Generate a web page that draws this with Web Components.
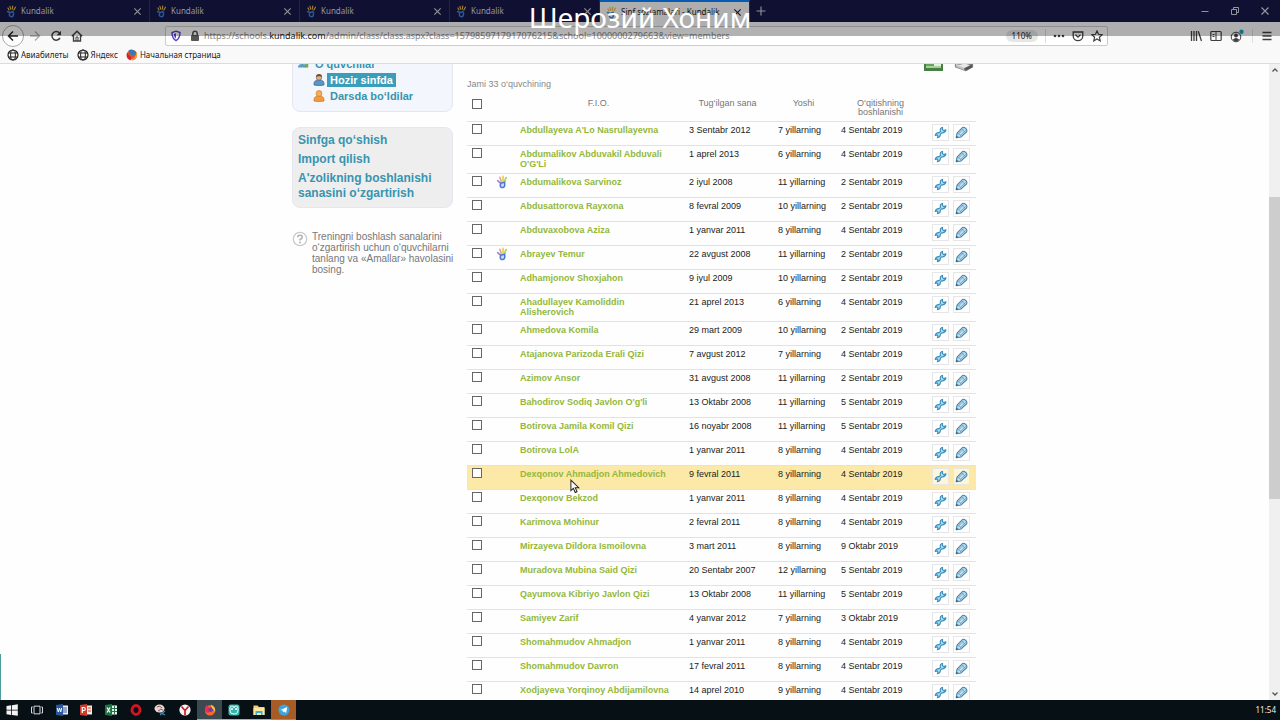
<!DOCTYPE html>
<html lang="uz">
<head>
<meta charset="utf-8">
<title>Sinf sozlamalari - Kundalik</title>
<style>
html, body { margin: 0; height: 100%; overflow: hidden; }
body { font-family: "Liberation Sans", Arial, sans-serif; font-size: 9px; background: #fefefe; }
</style>
</head>
<body>
<app-desktop></app-desktop>
<script>
const define = (name, render) => customElements.define(name, class extends HTMLElement {
  connectedCallback() {
    if (this.shadowRoot) return;
    const t = document.createElement('template');
    t.innerHTML = render(this);
    this.attachShadow({ mode: 'open' }).append(t.content.cloneNode(true));
  }
});

const icons = {
  kundalik: ['0 0 14 16', '<g fill="none" stroke-linecap="round"><path d="M6 5L5 1.500M8 5l.6-4M10 6l2-3.500M3.800 6L2.500 3.500" stroke="#e8bb3c" stroke-width="1.500"/><path d="M2 8l3 1.500 4-1.500M5 9q-2 5 1.500 5.500t3-5" stroke="#3f7fdc" stroke-width="1.900"/></g>'],
  hand: ['0 0 14 16', '<g fill="none" stroke-linecap="round"><path d="M6 7L4.500 2.500" stroke="#eaa7a0" stroke-width="2"/><path d="M8 7l.3-5.500" stroke="#e6d75c" stroke-width="2.200"/><path d="M9.800 7.500l2-4.500" stroke="#b7d36c" stroke-width="2.200"/><path d="M2 6.500l3.500 3" stroke="#9a86cf" stroke-width="2"/><path d="M5.500 9.500L10 8.200q1 5.800-2 6.200t-3-2.400z" stroke="#4d78cf" stroke-width="1.800" fill="#cfdcf6"/></g>'],
  close: ['0 0 10 10', '<path d="M1.5 1.5l7 7m0-7l-7 7" stroke="currentColor" stroke-width="1.2"/>'],
  plus: ['0 0 10 10', '<path d="M5 .5v9M.5 5h9" stroke="currentColor" stroke-width="1.1"/>'],
  minimize: ['0 0 10 10', '<path d="M1.5 5.5h7" stroke="currentColor"/>'],
  restore: ['0 0 10 10', '<path d="M1.5 3.5h5v5h-5zM3.5 3V1.5h5v5H7" fill="none" stroke="currentColor"/>'],
  back: ['0 0 12 12', '<path d="M11 6H1.5M6 1.5L1.5 6 6 10.500" fill="none" stroke="currentColor" stroke-width="1.500"/>'],
  forward: ['0 0 12 12', '<path d="M1 6h9.500M6 1.500L10.500 6 6 10.500" fill="none" stroke="currentColor" stroke-width="1.300"/>'],
  reload: ['0 0 12 12', '<path d="M10 8a4.300 4.300 0 1 1-.5-5" fill="none" stroke="currentColor" stroke-width="1.500"/><path d="M11 .8v4.400H6.600z" fill="currentColor"/>'],
  home: ['0 0 12 12', '<path d="M.8 6.200L6 1.200l5.200 5M2.500 5.500V11h7V5.500" fill="none" stroke="currentColor" stroke-width="1.400"/><path d="M5 11V7h2v4" fill="none" stroke="currentColor"/>'],
  shield: ['0 0 12 12', '<path d="M6 1.200l4 1.300c0 4.200-1 6.400-4 8.200-3-1.800-4-4-4-8.200z" fill="none" stroke="#5b41c9" stroke-width="1.400"/><path d="M6 3.300v5.200C4.500 7.400 4 6.200 3.900 4z" fill="#5b41c9"/>'],
  lock: ['0 0 12 12', '<rect x="2" y="5" width="8" height="6" rx="1" fill="#555"/><path d="M3.800 5V3.500a2.200 2.200 0 0 1 4.400 0V5" fill="none" stroke="#555" stroke-width="1.500"/>'],
  dots: ['0 0 12 12', '<g fill="currentColor"><circle cx="2" cy="6" r="1.300"/><circle cx="6" cy="6" r="1.300"/><circle cx="10" cy="6" r="1.300"/></g>'],
  pocket: ['0 0 12 12', '<path d="M1.200 2h9.600v4a4.800 4.600 0 0 1-9.600 0z" fill="none" stroke="currentColor" stroke-width="1.300"/><path d="M3.500 4.800L6 7.200l2.500-2.400" fill="none" stroke="currentColor" stroke-width="1.300"/>'],
  star: ['0 0 12 12', '<path d="M6 .9l1.500 3.400 3.700.4-2.800 2.500.8 3.700L6 9l-3.200 1.900.8-3.700L.8 4.700l3.700-.4z" fill="none" stroke="currentColor" stroke-width="1.200"/>'],
  library: ['0 0 12 12', '<path d="M1.500 1v10M4 1v10M6.500 1v10M8.300 1.300L11.500 11" stroke="currentColor" stroke-width="1.300" fill="none"/>'],
  sidebar: ['0 0 12 12', '<rect x=".8" y="1.500" width="10.400" height="9" rx="1" fill="none" stroke="currentColor" stroke-width="1.200"/><path d="M6 2v8M2.500 4.500h2M2.500 6.500h2" stroke="currentColor"/>'],
  account: ['0 0 14 14', '<circle cx="6" cy="8" r="4.800" fill="none" stroke="currentColor"/><circle cx="6" cy="6.500" r="1.900" fill="currentColor"/><path d="M2.800 10.700q3.200-3.200 6.400 0-3.200 3-6.400 0" fill="currentColor"/><circle cx="11.500" cy="2.700" r="2.200" fill="#19a5c4"/>'],
  menu: ['0 0 12 12', '<path d="M1.500 2.500h9M1.500 6h9M1.500 9.500h9" stroke="currentColor" stroke-width="1.300"/>'],
  globe: ['0 0 12 12', '<g fill="none" stroke="currentColor"><circle cx="6" cy="6" r="5" stroke-width="1.200"/><ellipse cx="6" cy="6" rx="2.400" ry="5"/><path d="M1.500 4h9M1.500 8h9"/></g>'],
  firefox: ['0 0 14 14', '<circle cx="7" cy="7.500" r="6" fill="#ff672a"/><path d="M1 7C1 3 3 1.500 3.500 1.200c0 2 1 2.300 2.500 2.300C5 5 6 8 9 7.500 7 11 1 11 1 7z" fill="#e62f58"/><circle cx="8" cy="6.500" r="2.800" fill="#5f42b7"/><path d="M8 .5c4 2 6 5 4.800 9.200C12 7 11 6 9.500 5.200z" fill="#ffc53d"/>'],
  firefoxOld: ['0 0 14 14', '<circle cx="7" cy="7" r="6" fill="#e8502a"/><path d="M3 1.500Q8-1 12 4L9.500 8 4 6z" fill="#3779bb"/><path d="M12 3.500q2.500 4-1 8-4 3-8 0 5 1 7-2t2-6z" fill="#f9a32b"/><path d="M1.500 3.500C2 5 3 8 6 9l-.5 4C1 12-.5 8 1.500 3.500z" fill="#d3262b"/>'],
  users: ['0 0 14 12', '<circle cx="5" cy="4" r="2.500" fill="#c89a72"/><path d="M0 10q0-4 5-4t5 4z" fill="#5b9bc4"/><path d="M8 5l4-3v8H8z" fill="#72ac54"/>'],
  userBlue: ['0 0 12 12', '<path d="M1 11V9.500Q1 6 6 6t5 3.500V11q-5 1.200-10 0z" fill="#5796cb" stroke="#3c6f9f" stroke-width=".8"/><circle cx="6" cy="3.500" r="2.700" fill="#dfb48c" stroke="#80583d" stroke-width=".7"/><path d="M3 3q0-3 3-3t3 3Q6 1.500 3 3" fill="#705038"/>'],
  userOrange: ['0 0 12 12', '<path d="M1 11V9.500Q1 6 6 6t5 3.500V11q-5 1.200-10 0z" fill="#f29a3d" stroke="#d77d23" stroke-width=".8"/><circle cx="6" cy="3.500" r="2.900" fill="#f6b05c" stroke="#d77d23" stroke-width=".8"/>'],
  help: ['0 0 16 16', '<circle cx="8" cy="8" r="6.700" fill="#fff" stroke="#cacaca" stroke-width="1.300"/><path d="M5.700 6.300q0-2 2.300-2t2.300 1.900Q10.300 7.500 8 8.500v1" fill="none" stroke="#b0b0b0" stroke-width="1.500"/><circle cx="8" cy="11.500" r=".9" fill="#b0b0b0"/>'],
  wrench: ['0 0 14 14', '<path d="M9.200 1.400Q6.200 2.200 6.900 5.800L5.600 7.200Q2.200 7 1.300 10.200l1.900-.5 1 1-.6 2Q7 12.200 6.900 8.700L8.300 7.300Q12 7.700 12.900 4.200l-2.300.8-1.500-1.400z" fill="#a9dcf0" stroke="#3a8fbb" stroke-width="1.200" stroke-linejoin="round"/>'],
  pencil: ['0 0 14 14', '<path d="M1.300 12.700l.9-5L8 1.700q1.500-1 3.500.8t1 3.700L6.600 11.800z" fill="#c4e1f1" stroke="#4485ad" stroke-width="1.200" stroke-linejoin="round"/><path d="M2.200 7.700q3.800.4 4.400 4.100M4.300 8L9.600 2.700M6.200 9.800l5.400-5.300M7 3l4.500 4.300" fill="none" stroke="#5a94b8" stroke-width=".8"/><path d="M1.200 12.800l.5-2.600 2 2z" fill="#27688f"/>'],
  excel: ['0 0 20 16', '<path d="M0 0h19v15H0z" fill="#487f45"/><path d="M2 1h15v11H2z" fill="#e5f2df"/><path d="M2 3h8v8H2z" fill="#68a45a"/><path d="M2 10h15v2H2z" fill="#a9cf9d"/>'],
  printer: ['0 0 22 17', '<path d="M1 7l7-4 13 3v6l-8 4.500L1 12z" fill="#7d7d7d"/><path d="M2 8l9 3v4L2 11.500z" fill="#c4c4c4"/><path d="M4 10l8 3 6-3-6-2z" fill="#e8e8e8"/><path d="M12 13l8-4v3l-7 4z" fill="#555"/>'],
  windows: ['0 0 12 12', '<path fill="#f4f4f4" d="M.5 2l4.700-.7v4.400H.5zM6 1.200L11.800.3v5.400H6zM.5 6.400h4.700v4.500L.5 10.200zM6 6.400h5.800v5.400L6 11z"/>'],
  taskview: ['0 0 14 12', '<path d="M3.500 1.500h7v9h-7zM2 2.500H.6v7H2M12 2.500h1.400v7H12" fill="none" stroke="#e5e5e5" stroke-width="1.100"/>'],
  word: ['0 0 12 12', '<path fill="#e9effb" d="M5 1.500h7v9H5z"/><path stroke="#39589b" d="M7 4h4M7 6h4M7 8h4"/><path fill="#2b579a" d="M0 1l7-1v12l-7-1z"/><path d="M1.300 4l1 4 1.200-4 1.200 4 1-4" fill="none" stroke="#fff"/>'],
  ppt: ['0 0 12 12', '<path fill="#f8e9e5" d="M5 1.500h7v9H5z"/><path stroke="#d1452f" d="M8 4h3M8 7h3"/><path fill="#cb3e2c" d="M0 1l7-1v12l-7-1z"/><path d="M2.300 9V3.500h1.500a1.500 1.500 0 0 1 0 3H2.300" fill="none" stroke="#fff" stroke-width="1.200"/>'],
  xls: ['0 0 12 12', '<path fill="#e5f4e9" d="M5 1.500h7v9H5z"/><path stroke="#217346" d="M9.500 2v8M7 4.500h5M7 7.500h5"/><path fill="#217346" d="M0 1l7-1v12l-7-1z"/><path d="M2 3.500l3 5m0-5l-3 5" stroke="#fff" stroke-width="1.200"/>'],
  opera: ['0 0 12 12', '<ellipse cx="6" cy="6" rx="4" ry="4.400" fill="none" stroke="#d51224" stroke-width="3"/>'],
  snip: ['0 0 12 12', '<ellipse cx="5.500" cy="4.500" rx="5" ry="4" fill="#e5d9d7"/><path d="M3 3q3-2 5 1M4 7q3-3 5-1" stroke="#a54945" fill="none"/><path d="M5 8l6 3M11 7l-5 4" stroke="#4d8ca8" stroke-width="1.200"/>'],
  yandex: ['0 0 12 12', '<circle cx="6" cy="6" r="5.600" fill="#f5f5f5"/><path d="M2.500 2.500L6 6.500l3.500-4M6 6v5" fill="none" stroke="#c51f2d" stroke-width="1.700"/>'],
  camera: ['0 0 12 12', '<rect x=".5" y=".5" width="11" height="11" rx="2" fill="#35b4ad"/><path d="M2 4q0-2 2-2t2 2q0-2 2-2t2 2v3q-1 4-4 3-4 0-4-3z" fill="none" stroke="#e4ffff"/><circle cx="4" cy="5" r="1" fill="#fff"/><circle cx="8" cy="5" r="1" fill="#fff"/>'],
  folder: ['0 0 12 12', '<path d="M.5 1.500h4L6 3h5.500v8H.5z" fill="#f5d36a"/><path d="M.5 4h11v7H.5z" fill="#ffe69a"/><path d="M2.500 11V7h7v4H8V9H4v2z" fill="#42a8d8"/>'],
  telegram: ['0 0 12 12', '<circle cx="6" cy="6" r="5.600" fill="#3ba6dc"/><path d="M2.300 5.900l7-2.900-1.200 6-2-1.500-1.100 1-.3-1.900z" fill="#fff"/>'],
  cursor: ['0 0 12 16', '<path d="M1 1v11.500l2.700-2.500 2 4.500 2-.9-2-4.300h3.800z" fill="#fff" stroke="#222" stroke-width="1.100"/>'],
  up: ['0 0 8 8', '<path d="M1.500 5.500L4 3l2.500 2.500" fill="none" stroke="#555" stroke-width="1.300"/>'],
  down: ['0 0 8 8', '<path d="M1.500 2.500L4 5l2.500-2.500" fill="none" stroke="#555" stroke-width="1.300"/>']
};

define('ui-icon', el => {
  const [box, body] = icons[el.getAttribute('name')];
  return `<style>:host{display:inline-block;flex:none;width:12px;height:12px}svg{display:block;width:100%;height:100%}</style>
  <svg viewBox="${box}" aria-hidden="true">${body}</svg>`;
});

define('browser-tab', () => `<style>
:host{display:flex;flex:0 0 150px;box-sizing:border-box;border-right:1px solid #34365c;color:#d5d5de;font:8px/22px "Noto Sans",sans-serif;min-width:0}
:host([active]){background:#fafafa;color:#222;border-top:2px solid #0a84ff;line-height:20px}
.tab{display:flex;align-items:center;flex:1;padding:0 7px 0 6px;gap:4px;min-width:0}
.label{flex:1;white-space:nowrap;overflow:hidden}
ui-icon{width:11px;height:13px}
button{all:unset;display:flex}button ui-icon{width:9px;height:9px}
</style><div class="tab"><ui-icon name="kundalik"></ui-icon><span class="label"><slot></slot></span>
<button aria-label="Yopish"><ui-icon name="close"></ui-icon></button></div>`);

define('browser-tabs', () => `<style>
:host{display:flex;height:22px;background:#17174a;color:#d5d5de}
button{all:unset;display:flex;align-items:center;justify-content:center;width:30px}
.new{width:22px}
.space{flex:1}
ui-icon{width:10px;height:10px}
</style>
<browser-tab>Kundalik</browser-tab><browser-tab>Kundalik</browser-tab><browser-tab>Kundalik</browser-tab><browser-tab>Kundalik</browser-tab><browser-tab active>Sinf sozlamalari - Kundalik</browser-tab>
<button class="new" aria-label="Yangi varaq"><ui-icon name="plus"></ui-icon></button><span class="space"></span>
<button aria-label="Yig‘ish"><ui-icon name="minimize"></ui-icon></button><button aria-label="Tiklash"><ui-icon name="restore"></ui-icon></button><button aria-label="Yopish"><ui-icon name="close"></ui-icon></button>`);

define('browser-toolbar', () => `<style>
:host{display:flex;align-items:center;height:23px;background:#f9f9fa;color:#3f3f42;padding:2px 7px 0 2px;gap:9px}
button{all:unset;display:flex;align-items:center;justify-content:center}
.back{width:20px;height:20px;border:1px solid #aaa;border-radius:50%;background:#fff;color:#222;margin-right:-4px}
.fwd{color:#aaa}
.address{flex:1;display:flex;align-items:center;box-sizing:border-box;height:20px;margin-left:73px;border:1px solid #ccc;border-radius:2px;background:#fff;padding:0 4px;gap:7px}
.url{flex:1;margin-left:-4px;font:9px/18px "Noto Sans",sans-serif;color:#888;white-space:nowrap;overflow:hidden}
.url b{font-weight:400;color:#222}
.zoom{font:8px/12px "Noto Sans",sans-serif;padding:0 6px;border-radius:6px;background:#e6e6e6;color:#222}
.sep{width:1px;height:14px;background:#ddd}
.right{display:flex;align-items:center;gap:8px;margin-left:73px}
.account{width:14px;height:14px}
</style>
<button class="back" aria-label="Orqaga"><ui-icon name="back"></ui-icon></button>
<button class="fwd" aria-label="Oldinga"><ui-icon name="forward"></ui-icon></button>
<button aria-label="Yangilash"><ui-icon name="reload"></ui-icon></button>
<button aria-label="Bosh sahifa"><ui-icon name="home"></ui-icon></button>
<div class="address"><ui-icon name="shield"></ui-icon><ui-icon name="lock"></ui-icon>
<div class="url" role="textbox" tabindex="0" contenteditable="plaintext-only" spellcheck="false" aria-label="Manzil">https://schools.<b>kundalik.com</b>/admin/class/class.aspx?class=1579859717917076215&amp;school=1000000279663&amp;view=members</div>
<button class="zoom">110%</button><span class="sep"></span><button aria-label="Amallar"><ui-icon name="dots"></ui-icon></button><button aria-label="Pocket"><ui-icon name="pocket"></ui-icon></button><button aria-label="Xatcho‘p"><ui-icon name="star"></ui-icon></button></div>
<div class="right"><button aria-label="Kutubxona"><ui-icon name="library"></ui-icon></button><button aria-label="Yon panel"><ui-icon name="sidebar"></ui-icon></button><button aria-label="Hisob"><ui-icon class="account" name="account"></ui-icon></button><span class="sep"></span><button aria-label="Menyu"><ui-icon name="menu"></ui-icon></button></div>`);

define('bookmark-bar', () => `<style>
:host{display:flex;align-items:center;height:16px;background:#f9f9fa;border-bottom:1px solid #dcdcdc;padding-left:7px;gap:8px;font:8px/16px "Noto Sans",sans-serif}
a{display:flex;align-items:center;gap:2px;color:#222;text-decoration:none}
</style><a href="#avia"><ui-icon name="globe"></ui-icon>Авиабилеты</a><a href="#yandex"><ui-icon name="globe"></ui-icon>Яндекс</a><a href="#start"><ui-icon name="firefoxOld"></ui-icon>Начальная страница</a>`);

define('class-sidebar', () => `<style>
:host{display:block;width:161px;flex:none;color:#3894af}
a{color:inherit;text-decoration:none}
nav{box-sizing:border-box;border:1px solid #e4e7ee;border-radius:8px;font-weight:700}
.members{background:#f3f6fd;height:58px;margin-top:-10px;padding:1px 5px;font-size:11px;line-height:14px}
.members div{display:flex;align-items:center;gap:5px;height:16px}
.members .sub{padding-left:15px;gap:2px}
.sub a{padding:0 3px}
.current a{background:#3a9db9;color:#fff}
.actions{background:#eee;margin-top:15px;padding:5px 5px 6px;font-size:12px;line-height:15px;display:flex;flex-direction:column;gap:4px}
.hint{display:flex;gap:4px;margin-top:23px;color:#777;font-size:10px;line-height:11px}
.hint ui-icon{width:16px;height:16px}
.hint p{margin:0;white-space:nowrap}
</style>
<nav class="members"><div><ui-icon name="users"></ui-icon><a href="#all">O‘quvchilar</a></div>
<div class="sub current"><ui-icon name="userBlue"></ui-icon><a href="#now">Hozir sinfda</a></div>
<div class="sub"><ui-icon name="userOrange"></ui-icon><a href="#past">Darsda bo‘ldilar</a></div></nav>
<nav class="actions"><a href="#add">Sinfga qo‘shish</a><a href="#import">Import qilish</a><a href="#dates">A'zolikning boshlanishi<br>sanasini o‘zgartirish</a></nav>
<div class="hint"><ui-icon name="help"></ui-icon><p>Treningni boshlash sanalarini<br>o‘zgartirish uchun o‘quvchilarni<br>tanlang va «Amallar» havolasini<br>bosing.</p></div>`);

const students = [
["Abdullayeva A'Lo Nasrullayevna","3 Sentabr 2012",7,"4 Sentabr"],
["Abdumalikov Abduvakil Abduvali<br>O'G'Li","1 aprel 2013",6,"4 Sentabr"],
["Abdumalikova Sarvinoz","2 iyul 2008",11,"2 Sentabr",'hand'],
["Abdusattorova Rayxona","8 fevral 2009",10,"2 Sentabr"],
["Abduvaxobova Aziza","1 yanvar 2011",8,"4 Sentabr"],
["Abrayev Temur","22 avgust 2008",11,"2 Sentabr",'hand'],
["Adhamjonov Shoxjahon","9 iyul 2009",10,"2 Sentabr"],
["Ahadullayev Kamoliddin<br>Alisherovich","21 aprel 2013",6,"4 Sentabr"],
["Ahmedova Komila","29 mart 2009",10,"2 Sentabr"],
["Atajanova Parizoda Erali Qizi","7 avgust 2012",7,"4 Sentabr"],
["Azimov Ansor","31 avgust 2008",11,"2 Sentabr"],
["Bahodirov Sodiq Javlon O'g'li","13 Oktabr 2008",11,"5 Sentabr"],
["Botirova Jamila Komil Qizi","16 noyabr 2008",11,"5 Sentabr"],
["Botirova LolA","1 yanvar 2011",8,"4 Sentabr"],
["Dexqonov Ahmadjon Ahmedovich","9 fevral 2011",8,"4 Sentabr",'hover'],
["Dexqonov Bekzod","1 yanvar 2011",8,"4 Sentabr"],
["Karimova Mohinur","2 fevral 2011",8,"4 Sentabr"],
["Mirzayeva Dildora Ismoilovna","3 mart 2011",8,"9 Oktabr"],
["Muradova Mubina Said Qizi","20 Sentabr 2007",12,"5 Sentabr"],
["Qayumova Kibriyo Javlon Qizi","13 Oktabr 2008",11,"5 Sentabr"],
["Samiyev Zarif","4 yanvar 2012",7,"3 Oktabr"],
["Shomahmudov Ahmadjon","1 yanvar 2011",8,"4 Sentabr"],
["Shomahmudov Davron","17 fevral 2011",8,"4 Sentabr"],
["Xodjayeva Yorqinoy Abdijamilovna","14 aprel 2010",9,"4 Sentabr"]
];

define('student-table', () => `<style>
:host{display:block}
table{width:100%;table-layout:fixed;border-collapse:separate;border-spacing:0;font-size:9px;line-height:11px;color:#222}
th{font-weight:400;color:#777;padding:4px 0 0;height:22px;vertical-align:top;line-height:9px}
th,td{border-bottom:1px solid #e2e2e2;text-align:left;white-space:nowrap}
td{height:20px;padding:3px 0 0;vertical-align:top}
th.c{text-align:center;padding-right:12px}
.box{padding-left:5px}
td.box{padding-top:2px}
input{appearance:none;display:block;width:10px;height:10px;margin:0;box-sizing:border-box;border:1px solid #666;background:#fff}
a{color:#93b83b;font-weight:700;text-decoration:none}
.two td{height:24px}
.two a{display:block;line-height:10px}
.hover td{background:#fce9a8}
.tools{display:flex;gap:4px}
td.t{padding-top:2px}
button{all:unset;box-sizing:border-box;width:17px;height:17px;border:1px solid #e6e6e6;background:#fff;display:flex;align-items:center;justify-content:center}
button ui-icon{width:13px;height:13px}
.hover button{background:#fff6d8}
td.mark{padding-top:1px}
.mark ui-icon{display:block;width:12px;height:14px}
.name{position:relative}
.pointer{position:absolute;left:50px;top:13px;width:11px;height:15px;z-index:1}
</style>
<table><colgroup><col style="width:29px"><col style="width:24px"><col style="width:169px"><col style="width:89px"><col style="width:63px"><col style="width:91px"><col></colgroup>
<thead><tr><th class="box"><input type="checkbox" aria-label="Hammasini tanlash"></th><th></th><th class="c">F.I.O.</th><th class="c">Tug‘ilgan sana</th><th class="c">Yoshi</th><th class="c">O‘qitishning<br>boshlanishi</th><th></th></tr></thead>
<tbody>${students.map(([n, d, a, s, f]) => `<tr class="${n.includes('<br>') ? 'two' : ''} ${f === 'hover' ? 'hover' : ''}">
<td class="box"><input type="checkbox" aria-label="${n.replace('<br>', ' ')}"></td><td class="mark">${f === 'hand' ? '<ui-icon name="hand"></ui-icon>' : ''}</td><td class="name"><a href="#student">${n}</a>${f === 'hover' ? '<ui-icon class="pointer" name="cursor"></ui-icon>' : ''}</td><td>${d}</td><td>${a} yillarning</td><td>${s} 2019</td>
<td class="t"><div class="tools"><button aria-label="Sozlash"><ui-icon name="wrench"></ui-icon></button><button aria-label="Tahrirlash"><ui-icon name="pencil"></ui-icon></button></div></td></tr>`).join('')}</tbody></table>`);

define('class-members', () => `<style>
:host{display:block;flex:1;min-width:0}
.export{display:flex;justify-content:flex-end;gap:10px;margin-top:-8px;padding-right:2px;height:16px}
.export a{display:block}
.export ui-icon{width:20px;height:16px}
.count{margin:7px 0 5px;color:#888;line-height:11px}
</style><div class="export"><a href="#excel" aria-label="Excel"><ui-icon name="excel"></ui-icon></a><a href="#print" aria-label="Chop etish"><ui-icon name="printer"></ui-icon></a></div>
<p class="count">Jami 33 o‘quvchining</p><student-table></student-table>`);

define('page-scrollbar', () => `<style>
:host{display:flex;flex-direction:column;align-items:center;flex:none;width:11px;background:#f0f0f0;padding:2px 0;box-sizing:border-box}
.track{flex:1;width:100%;display:grid;grid-template-rows:20fr 49fr 31fr}
.thumb{grid-row:2;background:#cdcdcd}
ui-icon{width:8px;height:8px}
</style><ui-icon name="up"></ui-icon><div class="track"><div class="thumb"></div></div><ui-icon name="down"></ui-icon>`);

define('task-bar', () => `<style>
:host{display:flex;justify-content:space-between;height:20px;background:#071015;color:#eee;font:8px/20px "Noto Sans",sans-serif}
.apps{display:grid;grid-template-columns:repeat(12,1fr);width:296px}
button{all:unset;box-sizing:border-box;display:flex;align-items:center;justify-content:center;border-bottom:1px solid transparent}
.open{border-color:#76b9ed}
.active{background:#3b4a50}
.alert{background:#a85b25;border-color:#f36c21}
time{padding-right:4px}
</style><div class="apps">
${['windows','taskview','word','ppt','xls','opera','snip','yandex','firefox','camera','folder','telegram'].map((n, i) => `<button class="${i > 7 && i < 11 ? 'open' : ''} ${i === 8 ? 'active' : ''} ${i === 11 ? 'alert' : ''}" aria-label="${n}"><ui-icon name="${n}"></ui-icon></button>`).join('')}
</div><time>11:54</time>`);

define('title-band', () => `<style>
:host{display:block;position:absolute;left:0;right:0;top:0;height:36px;background:rgba(0,0,0,.3);color:#fff;text-align:center;font:28px/34px "Noto Sans",sans-serif;pointer-events:none}
</style><slot></slot>`);

define('app-desktop', () => `<style>
:host{display:flex;flex-direction:column;height:100vh;position:relative}
.view{display:flex;flex:1;min-height:0;overflow:hidden;background:#fefefe}
main{flex:1;min-width:0;display:flex;justify-content:center;overflow:hidden}
.page{display:flex;align-items:flex-start;gap:14px;width:100%;max-width:684px;padding-right:2px}
.edge{flex:none;align-self:flex-end;width:1px;height:46px;background:#4e9c9f}
</style>
<browser-tabs></browser-tabs><browser-toolbar></browser-toolbar><bookmark-bar></bookmark-bar>
<div class="view"><div class="edge"></div><main><div class="page"><class-sidebar></class-sidebar><class-members></class-members></div></main><page-scrollbar></page-scrollbar></div>
<task-bar></task-bar><title-band>Шерозий Хоним</title-band>`);
</script>
</body>
</html>
